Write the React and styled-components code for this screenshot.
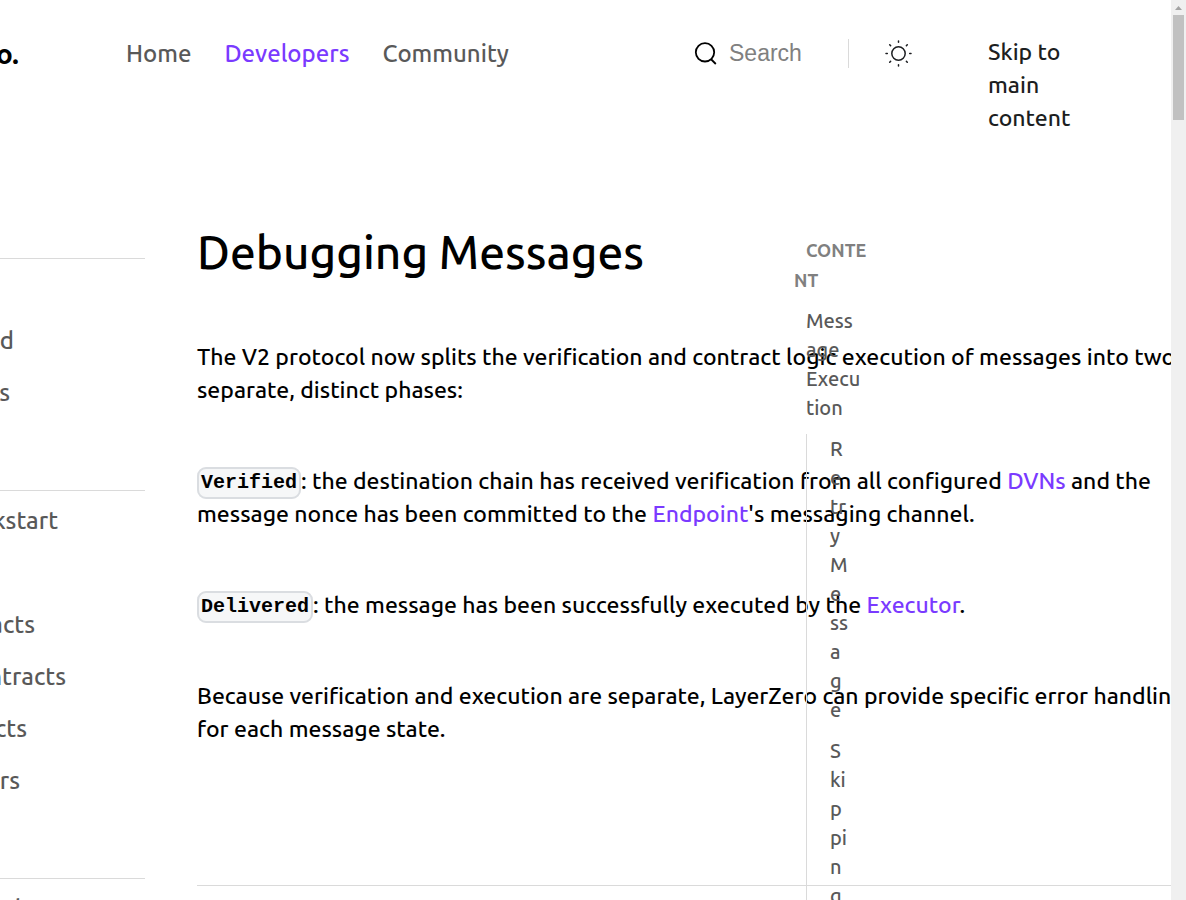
import React from "react";
import styled, { createGlobalStyle } from "styled-components";

const Global = createGlobalStyle`
  * { box-sizing: border-box; }
  body { margin: 0; background: #fff; color: #000; font-family: Ubuntu, "Noto Sans", sans-serif; font-weight: 500; }
  a { text-decoration: none; color: inherit; }
`;

const Shell = styled.div`
  display: grid;
  grid-template-columns: minmax(0, 1fr) 15px;
  height: 100vh;
  overflow: hidden;
`;

const Page = styled.div`
  min-width: 0;
  overflow: hidden;
`;

const Header = styled.header`
  display: grid;
  grid-template-columns: 126px minmax(0, 1fr) 477px;
  align-items: start;
  height: 219px;
  padding-top: 35px;
`;

const Logo = styled.a`
  width: 19px;
  display: flex;
  justify-content: flex-end;
  font-size: 28px;
  line-height: 38px;
  font-weight: 700;
`;

const Nav = styled.nav`
  display: flex;
  gap: 33px;
`;

const NavLink = styled.a`
  font-size: 24px;
  line-height: 38px;
  color: ${(p) => (p.$active ? "#7a3aff" : "#595959")};
`;

const Tools = styled.div`
  display: grid;
  grid-template-columns: 154px 140px 100px;
  align-items: start;
`;

const SearchBox = styled.label`
  display: flex;
  align-items: center;
  gap: 12px;
  height: 36px;
`;

const SearchInput = styled.input`
  width: 100px;
  padding: 0;
  border: 0;
  outline: 0;
  background: transparent;
  font: 23px/32px "Liberation Sans", sans-serif;
  &::placeholder { color: #808080; opacity: 1; }
`;

const ThemeButton = styled.button`
  justify-self: start;
  display: flex;
  align-items: center;
  height: 29px;
  margin-top: 4px;
  padding: 0 0 0 36px;
  border: 0;
  border-left: 1px solid #dadada;
  background: none;
`;

const SkipLink = styled.a`
  width: 90px;
  font-size: 23px;
  line-height: 33px;
  color: #1c1e21;
`;

const Body = styled.div`
  display: grid;
  grid-template-columns: 145px minmax(0, 1fr) 377px;
`;

const Sidebar = styled.aside`
  grid-area: 1 / 1;
  padding-top: 39px;
`;

const Group = styled.ul`
  margin: 0;
  padding: 4px 0 19px;
  border-top: 1px solid #dadada;
  list-style: none;
`;

const Item = styled.li`
  height: 52px;
`;

const SideLink = styled.a`
  display: flex;
  justify-content: flex-end;
  width: ${(p) => p.$end}px;
  font-size: 24px;
  line-height: 52px;
  color: #595959;
  white-space: nowrap;
`;

const Article = styled.main`
  grid-area: 1 / 2 / 2 / 4;
  padding-left: 52px;
  white-space: nowrap;
  overflow: hidden;
`;

const Title = styled.h1`
  margin: 0 0 55px;
  font-size: 46px;
  line-height: 66px;
  font-weight: 500;
`;

const Para = styled.p`
  margin: 0 0 58px;
  font-size: 23px;
  line-height: 33px;
`;

const TextLink = styled.a`
  color: #7a3aff;
`;

const Code = styled.code`
  padding: 2px 2px 3px;
  border: 2px solid #dadde1;
  border-radius: 9px;
  background: #f6f7f8;
  font: 700 20px "Liberation Mono", monospace;
  vertical-align: 1px;
`;

const Rule = styled.hr`
  margin: 140px 0 40px;
  border: 0;
  border-top: 1px solid #dadada;
`;

const Toc = styled.nav`
  grid-area: 1 / 3;
  z-index: 1;
  width: 80px;
  padding-top: 16px;
  color: #595959;
`;

const TocTitle = styled.div`
  text-indent: 12px;
  font-size: 18px;
  line-height: 30px;
  font-weight: 700;
  color: #808080;
  white-space: pre;
`;

const TocLink = styled.a`
  display: block;
  padding: 0 0 12px ${(p) => (p.$nested ? 23 : 12)}px;
  font-size: 20px;
  line-height: 29px;
  white-space: pre;
`;

const TocTop = styled.div`
  padding-top: 11px;
`;

const TocNested = styled.div`
  margin-left: 12px;
  border-left: 1px solid #dadada;
`;

const Scrollbar = styled.div`
  display: flex;
  flex-direction: column;
  align-items: center;
  background: #f0f0f0;
`;

const Thumb = styled.div`
  width: 11px;
  height: 105px;
  background: #c1c1c1;
`;

const groups = [
  [["", 0], ["d", 14], ["s", 10], ["", 0]],
  [["kstart", 58], ["", 0], ["acts", 35], ["ntracts", 66], ["cts", 27], ["rs", 20], ["", 0]],
  [["d", 21]],
];

export default function App() {
  return (
    <Shell>
      <Global />
      <Page>
        <Header>
          <Logo href="#">o.</Logo>
          <Nav>
            <NavLink href="#">Home</NavLink>
            <NavLink href="#" $active>Developers</NavLink>
            <NavLink href="#">Community</NavLink>
          </Nav>
          <Tools>
            <SearchBox>
              <svg width="23" height="24" viewBox="0 0 23 24" fill="none" stroke="#000" strokeWidth="1.8">
                <circle cx="11" cy="11.3" r="9.2" />
                <path d="M16.8 18l5 5" />
              </svg>
              <SearchInput type="search" placeholder="Search" aria-label="Search" />
            </SearchBox>
            <ThemeButton aria-label="Switch theme">
              <svg width="27" height="27" viewBox="0 0 27 27" fill="none" stroke="#1c1e21" strokeWidth="1.5" strokeLinecap="round">
                <circle cx="13.5" cy="13.5" r="6.7" />
                <path d="M13.5 1v1.3M13.5 24.7V26M1 13.5h1.3M24.7 13.5H26M4.7 4.7l.9.9M21.4 21.4l.9.9M4.7 22.3l.9-.9M21.4 5.6l.9-.9" />
              </svg>
            </ThemeButton>
            <SkipLink href="#content">Skip to main content</SkipLink>
          </Tools>
        </Header>
        <Body>
          <Sidebar>
            {groups.map((items, g) => (
              <Group key={g}>
                {items.map(([label, end], i) => (
                  <Item key={i}>{label && <SideLink href="#" $end={end}>{label}</SideLink>}</Item>
                ))}
              </Group>
            ))}
          </Sidebar>
          <Article id="content">
            <Title>Debugging Messages</Title>
            <Para>
              The V2 protocol now splits the verification and contract logic execution of messages into two
              <br />
              separate, distinct phases:
            </Para>
            <Para>
              <Code>Verified</Code>: the destination chain has received verification from all configured{" "}
              <TextLink href="#">DVNs</TextLink> and the
              <br />
              message nonce has been committed to the <TextLink href="#">Endpoint</TextLink>'s messaging channel.
            </Para>
            <Para>
              <Code>Delivered</Code>: the message has been successfully executed by the{" "}
              <TextLink href="#">Executor</TextLink>.
            </Para>
            <Para>
              Because verification and execution are separate, LayerZero can provide specific error handling
              <br />
              for each message state.
            </Para>
            <Rule />
          </Article>
          <Toc>
            <TocTitle>{"CONTE\nNT"}</TocTitle>
            <TocTop>
              <TocLink href="#">{"Mess\nage\nExecu\ntion"}</TocLink>
            </TocTop>
            <TocNested>
              <TocLink href="#" $nested>{"R\ne\ntr\ny\nM\ne\nss\na\ng\ne"}</TocLink>
              <TocLink href="#" $nested>{"S\nki\np\npi\nn\ng"}</TocLink>
            </TocNested>
          </Toc>
        </Body>
      </Page>
      <Scrollbar>
        <svg width="15" height="15" viewBox="0 0 15 15">
          <path d="M4 10L7.5 6L11 10z" fill="#a3a3a3" />
        </svg>
        <Thumb />
      </Scrollbar>
    </Shell>
  );
}
